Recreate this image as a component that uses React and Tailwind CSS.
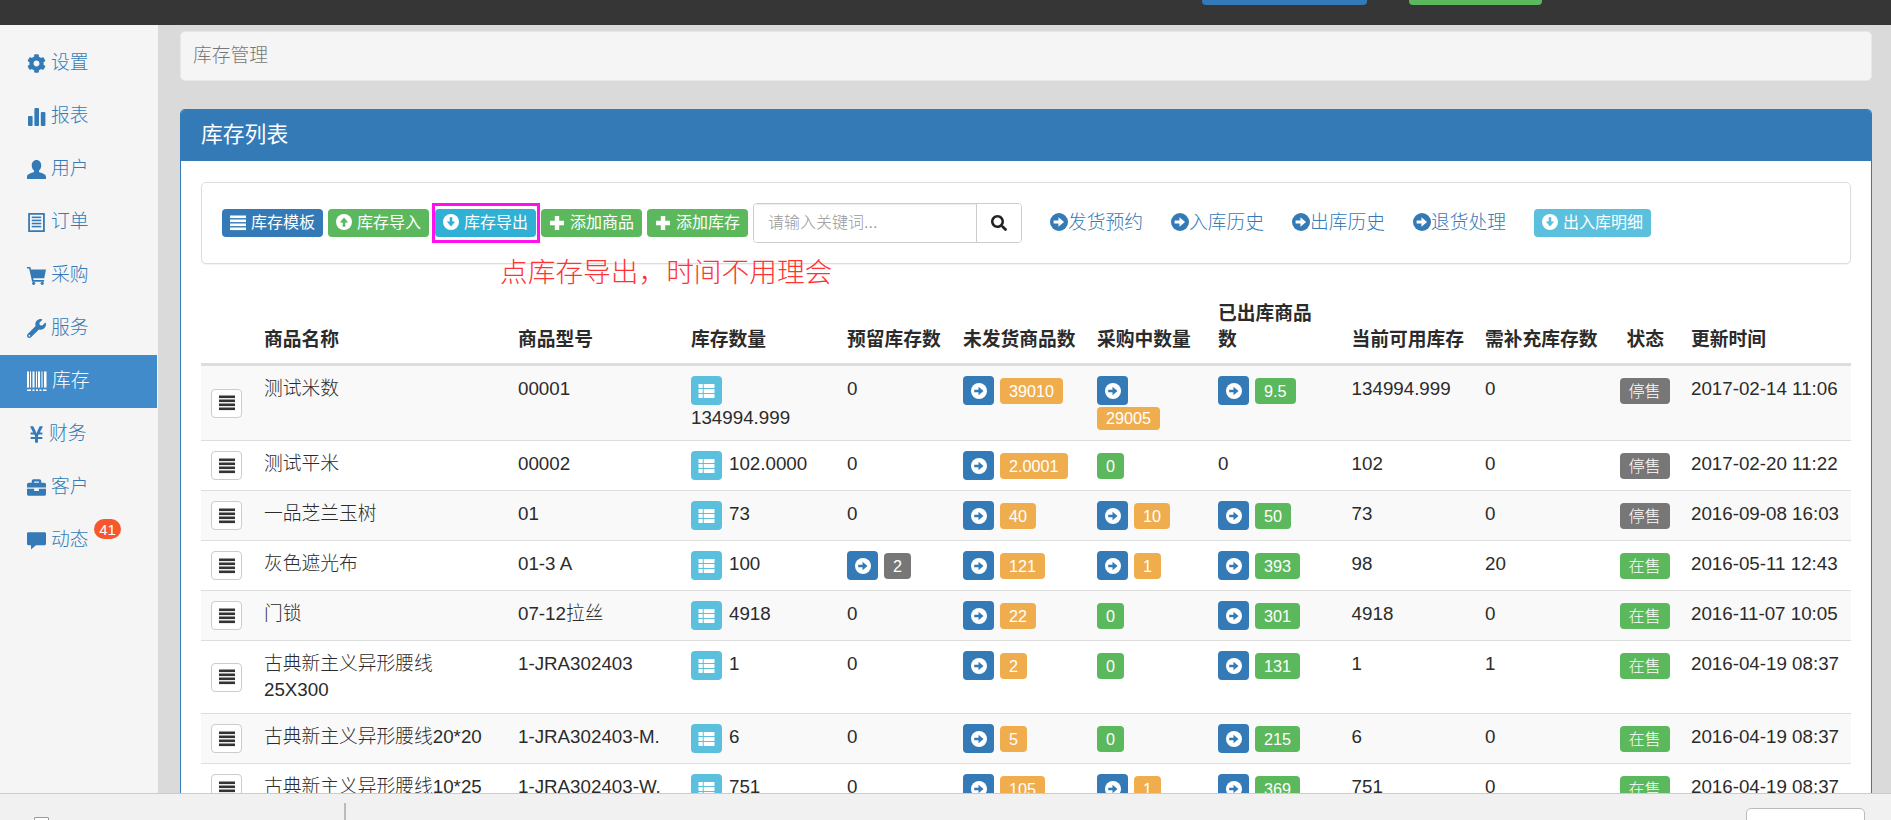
import { FaBriefcase, FaCog, FaSearch, FaWrench, FaYenSign } from 'react-icons/fa';

const fontStack = "font-['Liberation_Sans','Noto_Sans_CJK_SC',sans-serif]";

const IconStats = ({ className }) => (
  <svg viewBox="0 0 19 19" className={className} fill="currentColor">
    <rect x="1" y="9" width="4.6" height="10" rx="1" />
    <rect x="7.4" y="1" width="4.6" height="18" rx="1" />
    <rect x="13.8" y="5" width="4.6" height="14" rx="1" />
  </svg>
);

const IconUser = ({ className }) => (
  <svg viewBox="0 0 16 16" className={className} fill="currentColor">
    <path d="M8 0c2.4 0 4 2 4 4.6 0 1.8-.8 3.4-1.900 4.300v1.200c2.200.9 5.900 1.600 5.900 3.900V16H0v-2c0-2.300 3.700-3 5.900-3.900V8.900C4.800 8 4 6.400 4 4.600 4 2 5.600 0 8 0z" />
  </svg>
);

const IconListAlt = ({ className }) => (
  <svg viewBox="0 0 16 16" className={className} fill="currentColor">
    <path fillRule="evenodd" d="M1 0h14v16H1zM2.500 1.500v13h11v-13z" />
    <rect x="4" y="3" width="8" height="1.300" />
    <rect x="4" y="5.600" width="8" height="1.300" />
    <rect x="4" y="8.200" width="8" height="1.300" />
    <rect x="4" y="10.800" width="8" height="1.300" />
  </svg>
);

const IconCart = ({ className }) => (
  <svg viewBox="0 0 16 16" className={className} fill="currentColor">
    <path d="M0 .8h2.800l.6 2.200H16l-1.500 7.400H5.200l.3 1.400H14.400v1.400H4.300L1.800 2.200H0z" />
    <circle cx="5.600" cy="14.600" r="1.300" />
    <circle cx="12.800" cy="14.600" r="1.300" />
  </svg>
);

const IconBarcode = ({ className }) => (
  <svg viewBox="0 0 20 20" className={className} fill="currentColor">
    <rect x="0" y="0" width="2" height="16" />
    <rect x="3" y="0" width="1" height="16" />
    <rect x="5.500" y="0" width="2" height="16" />
    <rect x="9" y="0" width="1" height="16" />
    <rect x="11" y="0" width="2" height="16" />
    <rect x="14.500" y="0" width="1" height="16" />
    <rect x="17" y="0" width="2.500" height="16" />
    <rect x="0" y="18" width="4" height="1.500" />
    <rect x="5.500" y="18" width="2" height="1.500" />
    <rect x="9" y="18" width="2" height="1.500" />
    <rect x="12.500" y="18" width="2" height="1.500" />
    <rect x="16" y="18" width="3.500" height="1.500" />
  </svg>
);

const IconComment = ({ className }) => (
  <svg viewBox="0 0 16 16" className={className} fill="currentColor">
    <path d="M1.200 1h13.600c.7 0 1.200.5 1.200 1.200v8.600c0 .7-.5 1.200-1.200 1.200H7.500L3.400 15.500V12H1.200C.5 12 0 11.500 0 10.800V2.200C0 1.500.5 1 1.200 1z" />
  </svg>
);

const IconThList = ({ className }) => (
  <svg viewBox="0 0 16 16" className={className} fill="currentColor">
    <rect x="0" y="1" width="4.200" height="4" rx="0.4" />
    <rect x="5.200" y="1" width="10.800" height="4" rx="0.4" />
    <rect x="0" y="6" width="4.200" height="4" rx="0.4" />
    <rect x="5.200" y="6" width="10.800" height="4" rx="0.4" />
    <rect x="0" y="11" width="4.200" height="4" rx="0.4" />
    <rect x="5.200" y="11" width="10.800" height="4" rx="0.4" />
  </svg>
);

const IconJustify = ({ className }) => (
  <svg viewBox="0 0 16 16" className={className} fill="currentColor">
    <rect x="0" y="0.500" width="16" height="2.600" />
    <rect x="0" y="4.500" width="16" height="2.600" />
    <rect x="0" y="8.500" width="16" height="2.600" />
    <rect x="0" y="12.500" width="16" height="2.600" />
  </svg>
);

const IconPlus = ({ className }) => (
  <svg viewBox="0 0 16 16" className={className} fill="currentColor">
    <path d="M5.800 1h4.400v4.800H15v4.400h-4.800V15H5.800v-4.800H1V5.800h4.800z" />
  </svg>
);

// circle with an arrow in it, direction comes from a rotate class on the svg
const CircleArrow = ({ className, circle = 'fill-white', arrow }) => (
  <svg viewBox="0 0 16 16" className={className}>
    <circle cx="8" cy="8" r="8" className={circle} />
    <path d="M3.200 6.700h4.300V3.800L12.500 8l-5 4.200V9.300H3.200z" className={arrow} />
  </svg>
);

const navItems = [
  { label: '设置', icon: <FaCog className="h-[19px] w-[19px]" /> },
  { label: '报表', icon: <IconStats className="h-[19px] w-[19px]" /> },
  { label: '用户', icon: <IconUser className="h-[19px] w-[19px]" /> },
  { label: '订单', icon: <IconListAlt className="h-[19px] w-[19px]" /> },
  { label: '采购', icon: <IconCart className="h-[19px] w-[19px]" /> },
  { label: '服务', icon: <FaWrench className="h-[19px] w-[19px]" /> },
  { label: '库存', icon: <IconBarcode className="h-[21px] w-[20px]" />, active: true },
  { label: '财务', icon: <FaYenSign className="ml-[2px] h-[19px] w-[15px]" /> },
  { label: '客户', icon: <FaBriefcase className="h-[19px] w-[19px]" /> },
  { label: '动态', icon: <IconComment className="h-[19px] w-[19px]" />, badge: 41 },
];

const headers = [
  { label: '' },
  { label: '商品名称' },
  { label: '商品型号' },
  { label: '库存数量' },
  { label: '预留库存数' },
  { label: '未发货商品数' },
  { label: '采购中数量' },
  { label: <>已出库商品<br />数</> },
  { label: '当前可用库存' },
  { label: '需补充库存数' },
  { label: '状态', center: true },
  { label: '更新时间' },
];

const colWidths = ['w-[53px]', 'w-[254px]', 'w-[173px]', 'w-[156px]', 'w-[116px]', 'w-[134px]', 'w-[121px]', 'w-[133.6px]', 'w-[133.4px]', 'w-[134.6px]', 'w-[71.4px]', 'w-[170px]'];

const rows = [
  { name: '测试米数', model: '00001', qty: '134994.999', qtyWrap: true, reserved: '0', unshipped: '39010', buying: '29005', buyingBtn: true, buyingWrap: true, out: '9.5', outBtn: true, free: '134994.999', need: '0', on: false, time: '2017-02-14 11:06' },
  { name: '测试平米', model: '00002', qty: '102.0000', reserved: '0', unshipped: '2.0001', buying: '0', out: '0', free: '102', need: '0', on: false, time: '2017-02-20 11:22' },
  { name: '一品芝兰玉树', model: '01', qty: '73', reserved: '0', unshipped: '40', buying: '10', buyingBtn: true, out: '50', outBtn: true, free: '73', need: '0', on: false, time: '2016-09-08 16:03' },
  { name: '灰色遮光布', model: '01-3 A', qty: '100', reserved: '2', reservedBtn: true, unshipped: '121', buying: '1', buyingBtn: true, out: '393', outBtn: true, free: '98', need: '20', on: true, time: '2016-05-11 12:43' },
  { name: '门锁', model: '07-12拉丝', qty: '4918', reserved: '0', unshipped: '22', buying: '0', out: '301', outBtn: true, free: '4918', need: '0', on: true, time: '2016-11-07 10:05' },
  { name: <>古典新主义异形腰线<br />25X300</>, model: '1-JRA302403', qty: '1', reserved: '0', unshipped: '2', buying: '0', out: '131', outBtn: true, free: '1', need: '1', on: true, time: '2016-04-19 08:37' },
  { name: '古典新主义异形腰线20*20', model: '1-JRA302403-M.', qty: '6', reserved: '0', unshipped: '5', buying: '0', out: '215', outBtn: true, free: '6', need: '0', on: true, time: '2016-04-19 08:37' },
  { name: '古典新主义异形腰线10*25', model: '1-JRA302403-W.', qty: '751', reserved: '0', unshipped: '105', buying: '1', buyingBtn: true, out: '369', outBtn: true, free: '751', need: '0', on: true, time: '2016-04-19 08:37' },
];

const labelTones = {
  orange: 'bg-[#f0ad4e]',
  green: 'bg-[#5cb85c]',
  gray: 'bg-[#777777]',
};

const Label = ({ tone, children, className = '' }) => (
  <span className={`flex h-[26px] items-center justify-center rounded-[4px] text-[16.2px] leading-none whitespace-nowrap text-white ${labelTones[tone]} ${className}`}>
    {children}
  </span>
);

const ArrowBtn = () => (
  <span className="flex h-[29px] w-[31px] shrink-0 items-center justify-center rounded-[4px] bg-[#337ab7]">
    <CircleArrow className="h-[16px] w-[16px]" arrow="fill-[#337ab7]" />
  </span>
);

const Stat = ({ value, tone, withBtn, wrap }) => {
  if (wrap) {
    return (
      <div className="flex h-[54px] flex-col items-start gap-[2px]">
        <ArrowBtn />
        <Label tone={tone} className="px-[9px]">{value}</Label>
      </div>
    );
  }
  return (
    <div className="flex items-start gap-[6px]">
      {withBtn ? <ArrowBtn /> : null}
      <Label tone={tone} className="mt-[2px] px-[9px]">{value}</Label>
    </div>
  );
};

const QtyCell = ({ value, wrap }) => (
  <div className={wrap ? 'flex h-[54px] flex-col items-start' : 'flex items-start gap-[7px]'}>
    <span className="flex h-[29px] w-[31px] shrink-0 items-center justify-center rounded-[4px] bg-[#5bc0de] text-white">
      <IconThList className="h-[16px] w-[17px]" />
    </span>
    <span className="leading-[25px]">{value}</span>
  </div>
);

const ToolBtn = ({ tone, icon, children }) => (
  <button type="button" className={`inline-flex h-[28px] items-center gap-[5px] rounded-[4px] px-[8px] text-[16px] leading-none whitespace-nowrap text-white ${tone}`}>
    {icon}
    {children}
  </button>
);

const HistoryLink = ({ children }) => (
  <a className="inline-flex items-center text-[18.750px] leading-none font-light whitespace-nowrap text-[#337ab7]">
    <CircleArrow className="mb-[3px] h-[18px] w-[18px] shrink-0" circle="fill-[#337ab7]" arrow="fill-white" />
    {children}
  </a>
);

const Sidebar = () => (
  <aside className="w-[158px] shrink-0 bg-[#f5f5f5] pt-[12px]">
    {navItems.map((item) => (
      <div
        key={item.label}
        className={`relative mr-px flex h-[53px] items-center gap-[5px] pl-[27px] text-[18.750px] font-light ${item.active ? 'bg-[#428bca] text-white' : 'text-[#337ab7]'}`}
      >
        {item.icon}
        <span>{item.label}</span>
        {item.badge ? (
          <span className="absolute left-[94px] top-[5px] inline-flex h-[20px] w-[27px] items-center justify-center rounded-full bg-[#f8572d] text-[15px] leading-none font-normal text-white">
            {item.badge}
          </span>
        ) : null}
      </div>
    ))}
  </aside>
);

const Toolbar = () => (
  <div className="relative">
    <div className="flex h-[82px] items-center rounded-[5px] border border-[#dddddd] bg-white pl-[20px] shadow-[0_1px_1px_rgba(0,0,0,0.05)]">
      <div className="flex items-center gap-[5px]">
        <ToolBtn tone="bg-[#337ab7]" icon={<IconJustify className="h-[16px] w-[16px]" />}>库存模板</ToolBtn>
        <ToolBtn tone="bg-[#5cb85c]" icon={<CircleArrow className="mb-[3px] h-[16px] w-[16px] -rotate-90" arrow="fill-[#5cb85c]" />}>库存导入</ToolBtn>
        <div className="relative ml-[1px]">
          <ToolBtn tone="bg-[#31b0d5]" icon={<CircleArrow className="mb-[3px] h-[16px] w-[16px] rotate-90" arrow="fill-[#31b0d5]" />}>库存导出</ToolBtn>
          <span className="absolute -inset-x-[3.500px] -inset-y-[6px] border-[3px] border-[#ff11ee]" />
        </div>
        <ToolBtn tone="bg-[#5cb85c]" icon={<IconPlus className="h-[16px] w-[16px]" />}>添加商品</ToolBtn>
        <ToolBtn tone="bg-[#5cb85c]" icon={<IconPlus className="h-[16px] w-[16px]" />}>添加库存</ToolBtn>
        <div className="flex h-[40px] overflow-hidden rounded-[4px] border border-[#cccccc]">
          <input
            type="text"
            placeholder="请输入关键词..."
            className="h-full w-[222px] bg-white pl-[14px] text-[16px] font-light shadow-[inset_0_1px_1px_rgba(0,0,0,0.075)] outline-none placeholder:text-[#999999]"
          />
          <span className="flex w-[45px] items-center justify-center border-l border-[#cccccc] bg-white text-[#222222]">
            <FaSearch className="h-[16px] w-[16px]" />
          </span>
        </div>
      </div>
      <div className="ml-[28px] flex items-center gap-[28px]">
        <HistoryLink>发货预约</HistoryLink>
        <HistoryLink>入库历史</HistoryLink>
        <HistoryLink>出库历史</HistoryLink>
        <HistoryLink>退货处理</HistoryLink>
        <ToolBtn tone="bg-[#5bc0de]" icon={<CircleArrow className="mb-[3px] h-[16px] w-[16px] rotate-90" arrow="fill-[#5bc0de]" />}>出入库明细</ToolBtn>
      </div>
    </div>
    <span className="absolute left-[299px] top-[75px] text-[27.700px] leading-[32px] font-light whitespace-nowrap text-[#ff3333]">
      点库存导出，时间不用理会
    </span>
  </div>
);

const StockTable = () => (
  <table className="mt-[27px] w-[1650px] table-fixed border-collapse text-[18.750px] leading-[26px] font-light text-[#2b2b2b]">
    <colgroup>
      {colWidths.map((w, i) => <col key={i} className={w} />)}
    </colgroup>
    <thead>
      <tr>
        {headers.map((h, i) => (
          <th key={i} className={`border-b-[3px] border-[#dddddd] p-[10px] align-bottom font-bold ${h.center ? 'text-center' : 'text-left'}`}>
            {h.label}
          </th>
        ))}
      </tr>
    </thead>
    <tbody>
      {rows.map((row, i) => (
        <tr key={i} className={i % 2 === 0 ? 'bg-[#f9f9f9]' : 'bg-white'}>
          <td className="border-t border-[#dddddd] p-[10px] align-middle">
            <span className="flex h-[29px] w-[31px] items-center justify-center rounded-[4px] border border-[#cccccc] bg-white text-[#333333]">
              <IconJustify className="h-[16px] w-[16px]" />
            </span>
          </td>
          <td className="border-t border-[#dddddd] p-[10px] align-top">{row.name}</td>
          <td className="border-t border-[#dddddd] p-[10px] align-top whitespace-nowrap">{row.model}</td>
          <td className="border-t border-[#dddddd] p-[10px] align-top"><QtyCell value={row.qty} wrap={row.qtyWrap} /></td>
          <td className="border-t border-[#dddddd] p-[10px] align-top">
            {row.reservedBtn ? <Stat value={row.reserved} tone="gray" withBtn /> : row.reserved}
          </td>
          <td className="border-t border-[#dddddd] p-[10px] align-top"><Stat value={row.unshipped} tone="orange" withBtn /></td>
          <td className="border-t border-[#dddddd] p-[10px] align-top">
            <Stat value={row.buying} tone={row.buyingBtn ? 'orange' : 'green'} withBtn={row.buyingBtn} wrap={row.buyingWrap} />
          </td>
          <td className="border-t border-[#dddddd] p-[10px] align-top">
            {row.outBtn ? <Stat value={row.out} tone="green" withBtn /> : row.out}
          </td>
          <td className="border-t border-[#dddddd] p-[10px] align-top">{row.free}</td>
          <td className="border-t border-[#dddddd] p-[10px] align-top">{row.need}</td>
          <td className="border-t border-[#dddddd] p-[10px] align-top">
            <Label tone={row.on ? 'green' : 'gray'} className="mt-[2px] w-[50px]">{row.on ? '在售' : '停售'}</Label>
          </td>
          <td className="border-t border-[#dddddd] p-[10px] align-top whitespace-nowrap">{row.time}</td>
        </tr>
      ))}
    </tbody>
  </table>
);

const App = () => (
  <div className={`flex h-screen w-full flex-col overflow-hidden bg-[#dadada] ${fontStack}`}>
    <header className="flex h-[25px] shrink-0 items-start justify-end gap-[42px] bg-[#363636] pr-[349px]">
      <span className="h-[5px] w-[165px] rounded-b-[4px] bg-[#337ab7]" />
      <span className="h-[5px] w-[133px] rounded-b-[4px] bg-[#5cb85c]" />
    </header>

    <div className="flex min-h-0 flex-1">
      <Sidebar />
      <main className="flex min-w-0 flex-1 flex-col pl-[22px] pr-[19px] pt-[6px]">
        <div className="flex h-[50px] shrink-0 items-center rounded-[5px] border border-[#e8e8e8] bg-[#f5f5f5] pl-[12px] text-[18.750px] font-light text-[#777777]">
          库存管理
        </div>
        <section className="mt-[28px] flex min-h-0 flex-1 flex-col overflow-hidden rounded-t-[5px] border-x border-t border-[#337ab7] bg-white">
          <h2 className="flex h-[51px] shrink-0 items-center bg-[#337ab7] pl-[20px] text-[21.800px] font-normal text-white">库存列表</h2>
          <div className="px-[20px] pt-[21px]">
            <Toolbar />
            <StockTable />
          </div>
        </section>
      </main>
    </div>

    <footer className="flex h-[27px] shrink-0 items-start overflow-hidden border-t border-[#cccccc] bg-[#f1f1f1]">
      <div className="w-[344px] pl-[34px] pt-[23px]">
        <span className="block h-[6px] w-[15px] rounded-t-[1px] border border-[#999999] bg-white" />
      </div>
      <span className="mt-[9px] h-full w-[1.500px] bg-[#bbbbbb]" />
      <span className="ml-auto mr-[26px] mt-[14px] h-[30px] w-[119px] rounded-[5px] border border-[#bbbbbb] bg-white" />
    </footer>
  </div>
);

export default App;
